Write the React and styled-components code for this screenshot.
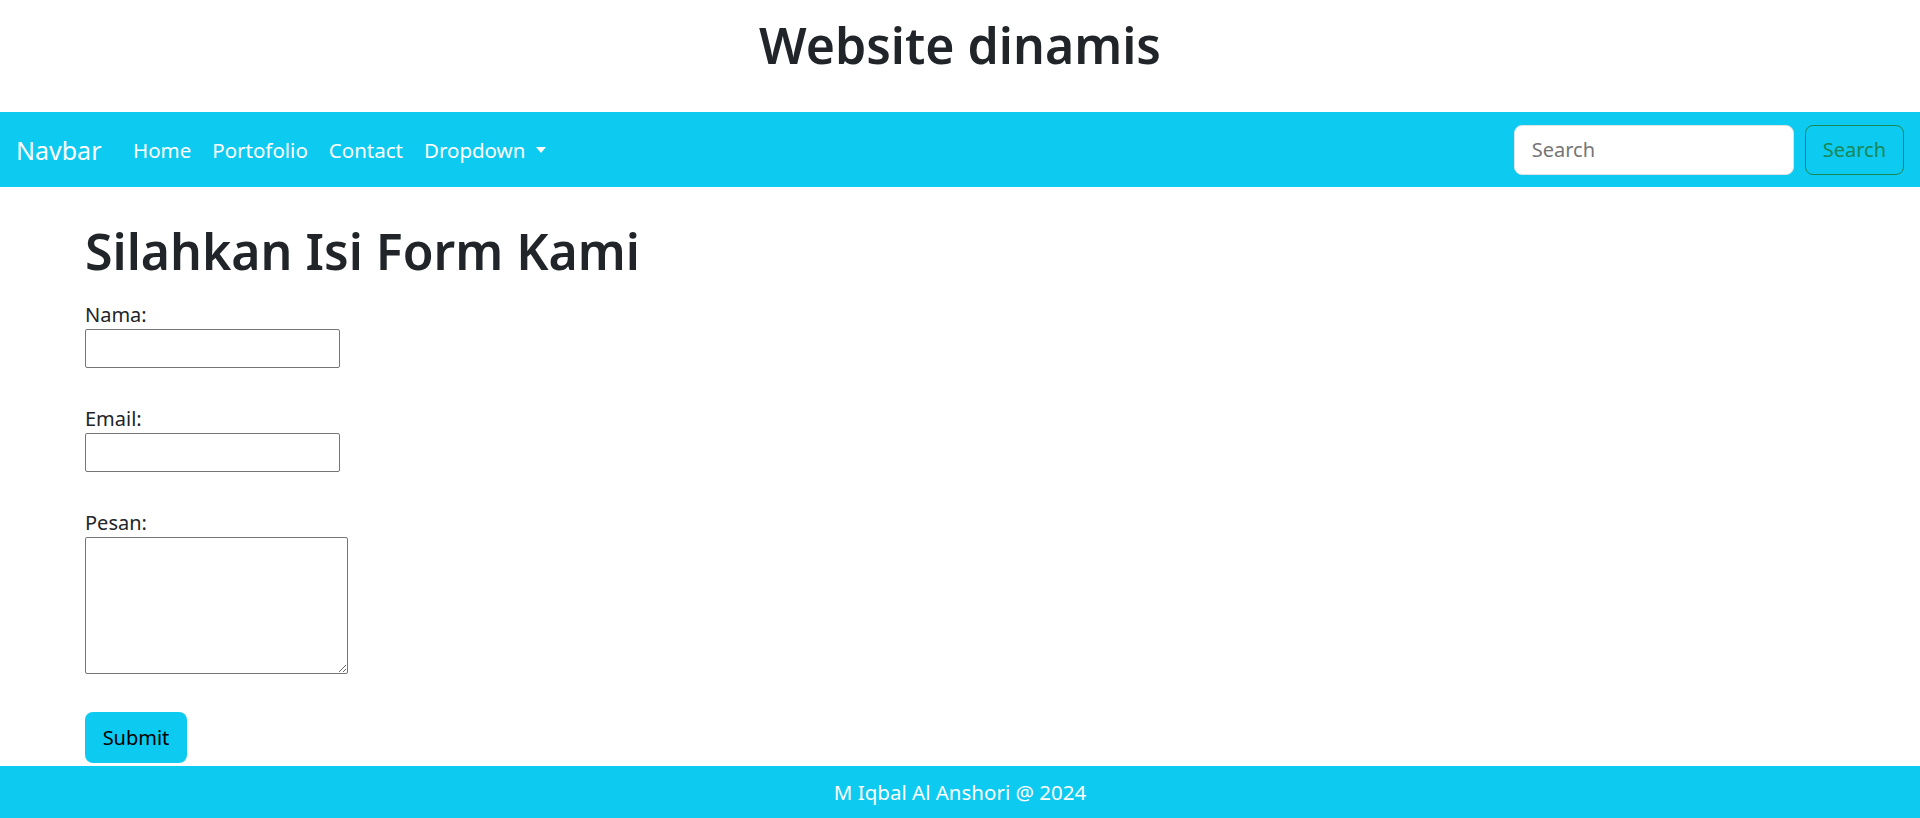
import React from "react"
import styled, { createGlobalStyle } from "styled-components"

const GlobalStyle = createGlobalStyle`
    * { box-sizing: border-box; }
    body {
        margin: 0;
        font-family: "Noto Sans", "Open Sans", sans-serif;
        color: #212529;
        background: #fff;
    }
`

const Page = styled.div`
    display: flex;
    flex-direction: column;
    min-height: 818px;
`

const Header = styled.header`
    height: 112px;
    display: flex;
    justify-content: center;
    padding-top: 15px;
`

const Title = styled.h1`
    margin: 0;
    font-size: 50px;
    font-weight: 600;
    line-height: 1.2;
`

const Nav = styled.nav`
    height: 75px;
    background: #0dcaf0;
    display: flex;
    align-items: center;
    padding: 0 16px;
`

const Brand = styled.a`
    font-size: 25px;
    color: #fff;
    margin-right: 21px;
    text-decoration: none;
`

const Links = styled.ul`
    display: flex;
    list-style: none;
    margin: 0;
    padding: 0;
    flex: 1;
`

const NavLink = styled.li`
    padding: 0 10.5px;
    font-size: 20.5px;
    color: #fff;
    display: flex;
    align-items: center;
`

const Caret = styled.span`
    display: inline-block;
    margin-left: 11px;
    border-top: 6px solid #fff;
    border-left: 5px solid transparent;
    border-right: 5px solid transparent;
`

const SearchForm = styled.form`
    display: flex;
    gap: 11px;
`

const SearchInput = styled.input`
    width: 280px;
    height: 50px;
    border: 1px solid #dee2e6;
    border-radius: 8px;
    padding: 0 17px;
    font-family: inherit;
    font-size: 20px;
    color: #212529;
    outline: none;
    ::placeholder { color: #6c757d; }
`

const SearchButton = styled.button`
    height: 50px;
    padding: 0 17px;
    background: transparent;
    border: 1px solid #198754;
    border-radius: 8px;
    color: #198754;
    font-family: inherit;
    font-size: 20px;
`

const Main = styled.main`
    flex: 1;
    padding: 34px 0 0 85px;
`

const Heading = styled.h1`
    margin: 0 0 20px;
    font-size: 50px;
    font-weight: 600;
    line-height: 1.2;
`

const Form = styled.form`
    display: flex;
    flex-direction: column;
    align-items: flex-start;
`

const Field = styled.div`
    display: flex;
    flex-direction: column;
    align-items: flex-start;
    margin-bottom: ${p => p.gap || 37}px;
`

const Label = styled.label`
    font-size: 20px;
    line-height: 28px;
`

const TextInput = styled.input`
    width: 255px;
    height: 39px;
    border: 1px solid #767676;
    border-radius: 2px;
    font-family: inherit;
`

const TextArea = styled.textarea`
    width: 263px;
    height: 137px;
    border: 1px solid #767676;
    border-radius: 2px;
    font-family: inherit;
`

const Submit = styled.button`
    width: 102px;
    height: 51px;
    background: #0dcaf0;
    border: none;
    border-radius: 8px;
    color: #000;
    font-family: inherit;
    font-size: 20px;
`

const Footer = styled.footer`
    height: 52px;
    margin-top: 3px;
    background: #0dcaf0;
    color: #fff;
    font-size: 20.5px;
    display: flex;
    align-items: center;
    justify-content: center;
`

export default function App() {
    return (
        <Page>
            <GlobalStyle />
            <Header>
                <Title>Website dinamis</Title>
            </Header>
            <Nav>
                <Brand href="#">Navbar</Brand>
                <Links>
                    <NavLink>Home</NavLink>
                    <NavLink>Portofolio</NavLink>
                    <NavLink>Contact</NavLink>
                    <NavLink>Dropdown<Caret /></NavLink>
                </Links>
                <SearchForm onSubmit={e => e.preventDefault()}>
                    <SearchInput type="search" placeholder="Search" />
                    <SearchButton type="submit">Search</SearchButton>
                </SearchForm>
            </Nav>
            <Main>
                <Heading>Silahkan Isi Form Kami</Heading>
                <Form onSubmit={e => e.preventDefault()}>
                    <Field>
                        <Label htmlFor="nama">Nama:</Label>
                        <TextInput id="nama" type="text" />
                    </Field>
                    <Field>
                        <Label htmlFor="email">Email:</Label>
                        <TextInput id="email" type="email" />
                    </Field>
                    <Field gap={38}>
                        <Label htmlFor="pesan">Pesan:</Label>
                        <TextArea id="pesan" />
                    </Field>
                    <Submit type="submit">Submit</Submit>
                </Form>
            </Main>
            <Footer>M Iqbal Al Anshori @ 2024</Footer>
        </Page>
    )
}
